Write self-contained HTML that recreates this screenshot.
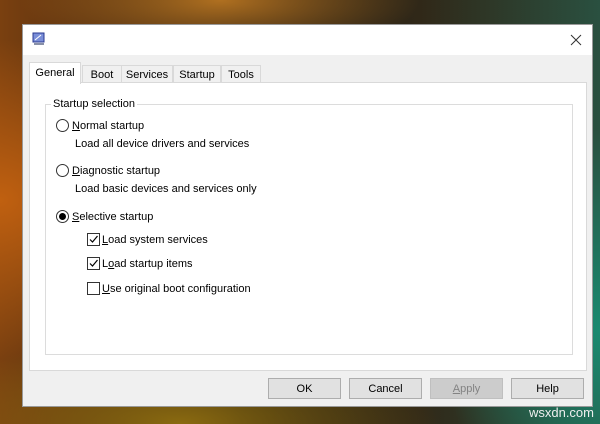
<!DOCTYPE html>
<html><head><style>
*{margin:0;padding:0;box-sizing:border-box}
body{width:600px;height:424px;overflow:hidden;position:relative;font-family:"Liberation Sans",sans-serif;font-size:11px;color:#000;
background:radial-gradient(ellipse 200px 160px at 0px 200px,#c06010 0%,transparent 100%),
radial-gradient(ellipse 260px 90px at 180px 424px,#8a6a10 0%,transparent 100%),
radial-gradient(ellipse 160px 200px at 600px 330px,#1a8a70 0%,transparent 100%),
radial-gradient(ellipse 200px 60px at 220px 0px,#b07020 0%,transparent 100%),
linear-gradient(90deg,#7a4010,#201810 40%,#302818 70%,#2a5040);}
.a{position:absolute;white-space:nowrap}
.win{position:absolute;left:22px;top:24px;width:571px;height:383px;background:#f0f0f0;border:1px solid #999}
.title{position:absolute;left:0;top:0;width:100%;height:30px;background:#fff}
.tab{position:absolute;top:40px;height:18px;background:#f0f0f0;border:1px solid #d9d9d9;border-bottom:none;text-align:center;line-height:18px}
.panel{position:absolute;left:6px;top:57px;width:558px;height:289px;background:#fff;border:1px solid #d9d9d9}
.grp{position:absolute;left:15px;top:21px;width:528px;height:251px;border:1px solid #dcdcdc}
.rad{position:absolute;width:13px;height:13px;border:1px solid #333;border-radius:50%;background:#fff}
.chk{position:absolute;width:13px;height:13px;border:1px solid #333;background:#fff}
.btn{position:absolute;top:353px;width:73px;height:21px;background:#e1e1e1;border:1px solid #adadad;text-align:center;line-height:21px}
u{text-decoration:underline}
</style></head><body>
<div class="a" style="right:6px;bottom:4px;color:#eee;font-size:13px">wsxdn.com</div>
<div class="win">
 <div class="title">
  <svg class="a" style="left:9px;top:7px" width="14" height="14"><rect x="1" y="1" width="11" height="9" fill="#7a8ed8" stroke="#2a3a90"/><path d="M3 8 L9 3" stroke="#fff"/><rect x="2" y="11" width="10" height="2" fill="#8890a8"/></svg>
  <svg class="a" style="left:547px;top:9px" width="12" height="12"><path d="M1 1L11 11M11 1L1 11" stroke="#333" stroke-width="1"/></svg>
 </div>
 <div class="tab" style="left:59px;width:40px">Boot</div>
 <div class="tab" style="left:98px;width:52px">Services</div>
 <div class="tab" style="left:150px;width:48px">Startup</div>
 <div class="tab" style="left:198px;width:40px">Tools</div>
 <div class="panel">
  <div class="grp"></div>
  <div class="a" style="left:21px;top:15px;background:#fff;padding:0 2px">Startup selection</div>
  <div class="rad" style="left:26px;top:36px"></div>
  <div class="a" style="left:42px;top:37px"><u>N</u>ormal startup</div>
  <div class="a" style="left:45px;top:55px">Load all device drivers and services</div>
  <div class="rad" style="left:26px;top:81px"></div>
  <div class="a" style="left:42px;top:82px"><u>D</u>iagnostic startup</div>
  <div class="a" style="left:45px;top:100px">Load basic devices and services only</div>
  <div class="rad" style="left:26px;top:127px"><div style="position:absolute;left:2px;top:2px;width:7px;height:7px;border-radius:50%;background:#000"></div></div>
  <div class="a" style="left:42px;top:128px"><u>S</u>elective startup</div>
  <div class="chk" style="left:57px;top:150px"><svg width="11" height="11" style="position:absolute;left:0;top:0"><path d="M2 5.5L4.5 8L9.5 2" stroke="#000" fill="none" stroke-width="1.2"/></svg></div>
  <div class="a" style="left:72px;top:151px"><u>L</u>oad system services</div>
  <div class="chk" style="left:57px;top:174px"><svg width="11" height="11" style="position:absolute;left:0;top:0"><path d="M2 5.5L4.5 8L9.5 2" stroke="#000" fill="none" stroke-width="1.2"/></svg></div>
  <div class="a" style="left:72px;top:175px">L<u>o</u>ad startup items</div>
  <div class="chk" style="left:57px;top:199px"></div>
  <div class="a" style="left:72px;top:200px"><u>U</u>se original boot configuration</div>
 </div>
 <div class="tab" style="left:6px;top:37px;width:52px;height:22px;background:#fff;line-height:20px">General</div>
 <div class="btn" style="left:245px">OK</div>
 <div class="btn" style="left:326px">Cancel</div>
 <div class="btn" style="left:407px;background:#ccc;border-color:#bfbfbf;color:#838383"><u>A</u>pply</div>
 <div class="btn" style="left:488px">Help</div>
</div>
</body></html>
